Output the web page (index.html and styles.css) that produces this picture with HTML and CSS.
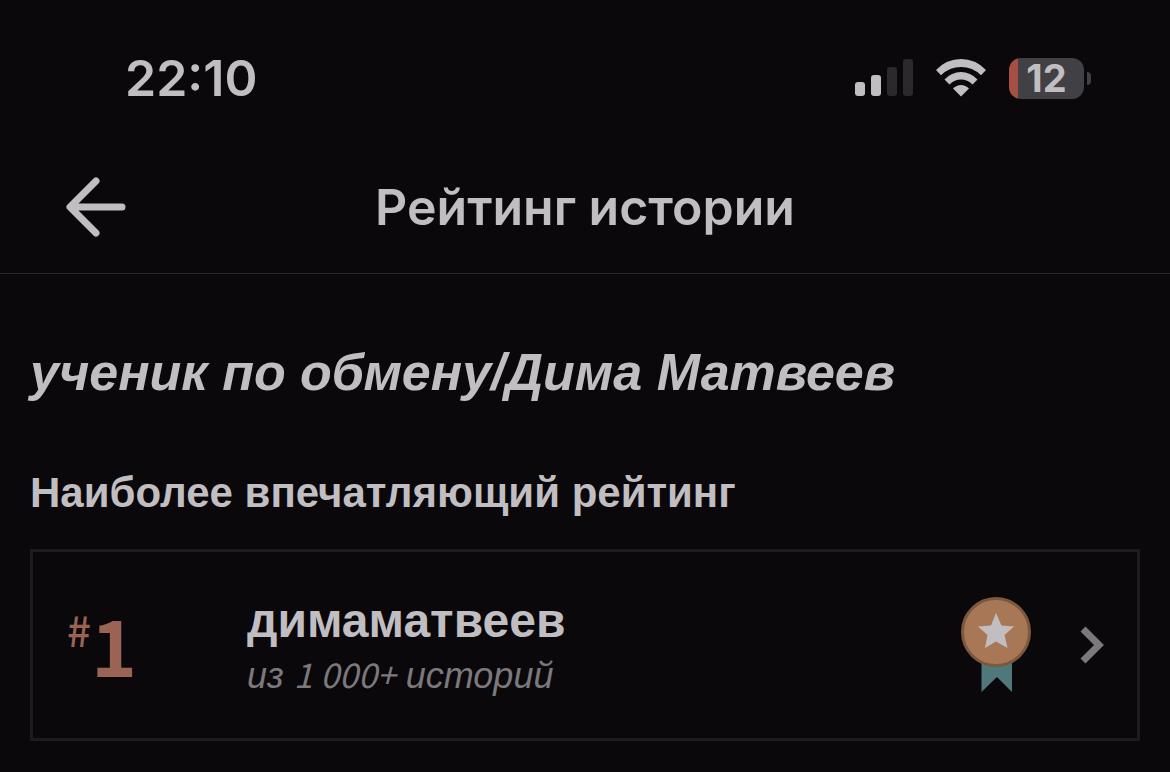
FILE: index.html
```
<!DOCTYPE html>
<html lang="ru">
<head>
  <meta charset="UTF-8" />
  <meta name="viewport" content="width=device-width, initial-scale=1" />
  <title>Рейтинг истории</title>
  <link rel="stylesheet" href="styles.css">
</head>
<body>

<div class="status-bar">
  <time class="clock">22:10</time>
  <div class="status-icons">
    <svg class="signal" width="58" height="38" viewBox="0 0 58 38" aria-hidden="true">
      <rect x="0" y="23" width="10" height="14" rx="3" fill="#c0bec1" />
      <rect x="16" y="16" width="10" height="21" rx="3" fill="#c0bec1" />
      <rect x="32" y="8" width="10" height="29" rx="3" fill="#2b292d" />
      <rect x="48" y="0" width="10" height="37" rx="3" fill="#2b292d" />
    </svg>
    <svg class="wifi" width="52" height="38" viewBox="0 0 52 38" aria-hidden="true">
      <path d="M1 11Q11.500 0 26 0T51 11L46 16.200Q37.500 8 26 8T6 16.200Z" />
      <path d="M9.500 20.500Q16.500 13 26 13T42.500 20.500L37.500 25.500Q32.500 20.500 26 20.500T14.500 25.500Z" />
      <path d="M18 29.500Q21.500 26 26 26T34 29.500L26 37.500Z" />
    </svg>
    <div class="battery">
      <span class="battery-level">12</span>
    </div>
  </div>
</div>

<header class="nav-bar">
  <button class="back" type="button" aria-label="Назад">
    <svg width="62" height="62" viewBox="0 0 62 62" aria-hidden="true">
      <path d="M31 5L5 31L31 57M6 31H57" />
    </svg>
  </button>
  <h1 class="nav-title">Рейтинг истории</h1>
</header>

<main class="content">
  <h2 class="story-title">ученик по обмену/Дима Матвеев</h2>
  <h3 class="section-title">Наиболее впечатляющий рейтинг</h3>

  <a class="rank-card" href="#">
    <span class="rank"><span class="hash">#</span><span class="place">1</span></span>
    <span class="tag">
      <span class="tag-name">димаматвеев</span>
      <span class="tag-total">из <span class="number">1 000+</span> историй</span>
    </span>
    <svg class="medal" width="70" height="96" viewBox="0 0 70 96" aria-hidden="true">
      <path d="M20.500 60H51V95L36 80L20.500 95Z" fill="#50777a" />
      <circle cx="35" cy="35" r="33.500" fill="#a87856" stroke="#7d583e" stroke-width="3" />
      <path d="M35 16L40.500 28.500L53 29.500L43.500 38L46.500 51L35 44.500L24 51L26.500 38L17 29.500L30 28.500Z" fill="#c0bec1" />
    </svg>
    <svg class="chevron" width="26" height="40" viewBox="0 0 26 40" aria-hidden="true">
      <path d="M4 4L20 20L4 36" />
    </svg>
  </a>
</main>

</body>
</html>
```
FILE: styles.css
```
* {
  box-sizing: border-box;
}

body {
  margin: 0;
  background: #0a080b;
  color: #c0bec1;
  font-family: "Liberation Sans", Arial, sans-serif;
}

.status-bar {
  display: flex;
  justify-content: space-between;
  align-items: center;
  height: 156px;
  padding: 0 80px 0 125px;
}

.clock {
  font-family: Inter, sans-serif;
  font-size: 50px;
  font-weight: 600;
  line-height: 60px;
}

.status-icons {
  display: flex;
  align-items: center;
  gap: 22px;
}

.wifi {
  fill: #c0bec1;
}

.battery {
  position: relative;
  width: 75px;
  height: 41px;
  border-radius: 12px;
  background: linear-gradient(to right, #a65045 9px, #414044 9px);
  font-family: Inter, sans-serif;
  font-size: 38px;
  font-weight: 700;
  line-height: 41px;
  text-align: center;
}

.battery::after {
  content: "";
  position: absolute;
  top: 14px;
  right: -7px;
  width: 4px;
  height: 13px;
  border-radius: 0 4px 4px 0;
  background: #414044;
}

.status-icons .battery {
  margin-right: 6px;
}

.nav-bar {
  display: grid;
  grid-template-columns: 62px 1fr 62px;
  align-items: center;
  height: 118px;
  padding: 0 65px 16px;
  border-bottom: 1px solid #29272a;
}

.back {
  height: 62px;
  padding: 0;
  border: none;
  background: none;
  cursor: pointer;
}

.back svg {
  display: block;
  fill: none;
  stroke: #c0bec1;
  stroke-width: 7;
  stroke-linecap: round;
  stroke-linejoin: round;
}

.nav-title {
  margin: 0;
  font-family: Inter, sans-serif;
  font-size: 50px;
  font-weight: 600;
  line-height: 60px;
  text-align: center;
}

.content {
  padding: 65px 30px 30px;
}

.story-title {
  margin: 0;
  font-size: 52px;
  font-style: italic;
  line-height: 66px;
}

.section-title {
  margin: 64px 0 32px;
  font-size: 42px;
  line-height: 48px;
}

.rank-card {
  display: flex;
  align-items: center;
  height: 192px;
  padding: 0 32px 0 34px;
  border: 3px solid #1d1b1e;
  color: inherit;
  text-decoration: none;
}

.rank {
  display: flex;
  align-items: flex-start;
  width: 180px;
  padding-bottom: 4px;
  color: #9b6353;
  font-family: "Noto Sans CJK SC", sans-serif;
}

.hash {
  font-size: 42px;
  font-weight: 500;
  line-height: 68px;
}

.place {
  font-size: 78px;
  font-weight: 700;
  line-height: 96px;
}

.tag {
  display: flex;
  flex: 1;
  flex-direction: column;
  padding-top: 4px;
}

.tag-name {
  font-size: 48px;
  font-weight: 700;
  line-height: 56px;
}

.tag-total {
  color: #7b797c;
  font-size: 36px;
  font-style: italic;
  line-height: 50px;
}

.number {
  font-family: "Noto Sans CJK SC", sans-serif;
  font-size: 34px;
  font-weight: 400;
}

.medal {
  margin-right: 48px;
}

.chevron {
  fill: none;
  stroke: #7b797c;
  stroke-width: 7;
}
```
